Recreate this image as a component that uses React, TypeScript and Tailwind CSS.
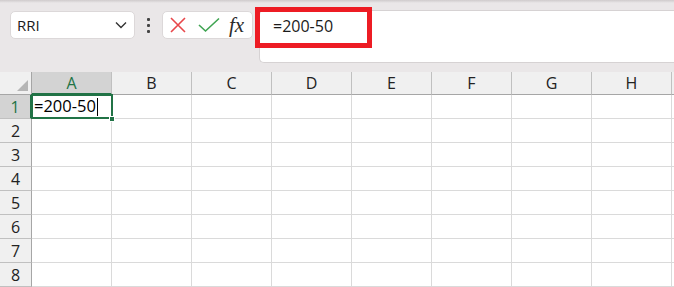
import React from "react";

const cols = ["A", "B", "C", "D", "E", "F", "G", "H"];
const rows = [1, 2, 3, 4, 5, 6, 7, 8];

export default function App() {
  return (
    <div
      className="relative w-[674px] h-[287px] overflow-hidden bg-[#eae7e8]"
      style={{ fontFamily: '"Open Sans", "Noto Sans", sans-serif' }}
    >
      {/* top shadow */}
      <div className="h-[3px] bg-gradient-to-b from-[#cfcbcc] to-[#eae7e8]" />
      {/* toolbar */}
      <div className="relative h-[69px] flex items-start pl-[10px] pt-[8px]">
        {/* name box */}
        <div className="w-[125px] h-[28px] bg-white border border-[#dcd8d9] rounded-[5px] flex items-center justify-between pl-[6px] pr-[7px] text-[15px] text-[#1b1b1b]">
          <span className="leading-none">RRI</span>
          <svg width="12" height="8" viewBox="0 0 12 8">
            <path d="M1 1.5 L6 6.5 L11 1.5" fill="none" stroke="#333" strokeWidth="1.4" />
          </svg>
        </div>
        {/* dots */}
        <div className="w-[27px] h-[28px] flex flex-col items-center justify-center gap-[3px]">
          <div className="w-[3px] h-[3px] bg-[#444] rounded-[1px]" />
          <div className="w-[3px] h-[3px] bg-[#444] rounded-[1px]" />
          <div className="w-[3px] h-[3px] bg-[#444] rounded-[1px]" />
        </div>
        {/* icons box */}
        <div className="w-[91px] h-[28px] bg-white border border-[#dcd8d9] rounded-[5px] flex items-center pl-[6px]">
          <svg width="18" height="18" viewBox="0 0 18 18">
            <path d="M2 2 L16 16 M16 2 L2 16" stroke="#e8474b" strokeWidth="1.6" fill="none" />
          </svg>
          <svg width="22" height="16" viewBox="0 0 22 16" className="ml-[11px]">
            <path d="M1 8 L7.5 14 L21 1.5" stroke="#3fa452" strokeWidth="1.6" fill="none" />
          </svg>
          <span
            className="ml-[9px] italic text-[21px] leading-none text-[#2b2b2b]"
            style={{ fontFamily: '"Liberation Serif", "DejaVu Serif", serif' }}
          >
            fx
          </span>
        </div>
        {/* formula bar */}
        <div className="ml-[6px] mt-[-1px] flex-1 h-[53px] bg-white border-l border-t border-b border-[#d6d2d3] rounded-l-[5px] pl-[13px] pt-[3px] text-[16px] leading-[24px] text-[#1b1b1b]">
          =200-50
        </div>
        {/* red highlight */}
        <div className="absolute left-[255px] top-[4px] w-[117px] h-[41px] border-[5px] border-[#ed1c24]" />
      </div>
      {/* grid */}
      <div className="grid grid-cols-[32px_repeat(8,80px)_1fr] grid-rows-[23px_repeat(8,24px)]">
        {/* corner */}
        <div className="relative bg-[#f0f0f0] border-b border-r border-[#a6a6a6]">
          <svg width="11" height="11" viewBox="0 0 11 11" className="absolute right-[3px] bottom-[3px]">
            <path d="M11 0 L11 11 L0 11 Z" fill="#b5b5b5" />
          </svg>
        </div>
        {cols.map((c, i) => (
          <div
            key={c}
            className={
              i === 0
                ? "bg-[#d3d3d3] border-b-2 border-b-[#217346] border-r border-r-[#c0c0c0] flex items-center justify-center text-[16px] text-[#217346]"
                : "bg-[#f0f0f0] border-b border-b-[#a6a6a6] border-r border-r-[#c0c0c0] flex items-center justify-center text-[16px] text-[#222]"
            }
          >
            {c}
          </div>
        ))}
        <div className="bg-[#f0f0f0] border-b border-b-[#a6a6a6]" />
        {rows.map((r) => (
          <React.Fragment key={r}>
            <div
              className={
                r === 1
                  ? "bg-[#d3d3d3] border-r-2 border-r-[#217346] border-b border-b-[#c0c0c0] flex items-center justify-center text-[16px] text-[#217346]"
                  : "bg-[#f0f0f0] border-r border-r-[#a6a6a6] border-b border-b-[#c0c0c0] flex items-center justify-center text-[16px] text-[#222]"
              }
            >
              {r}
            </div>
            {cols.map((c) => (
              <div
                key={c}
                className="relative bg-white border-r border-b border-[#dadada]"
              >
                {r === 1 && c === "A" && (
                  <>
                    <div className="absolute -left-px -top-px w-[82px] h-[25px] border-2 border-[#217346] z-10" />
                    <div className="absolute right-[-4px] bottom-[-4px] w-[6px] h-[6px] bg-[#217346] border border-white z-20" />
                    <div className="absolute left-[2px] top-0 h-full flex items-center text-[16.5px] text-black z-20">
                      <span>=200-50</span>
                      <span className="ml-[1px] w-px h-[18px] bg-black" />
                    </div>
                  </>
                )}
              </div>
            ))}
            <div className="bg-white border-b border-[#dadada]" />
          </React.Fragment>
        ))}
      </div>
    </div>
  );
}
